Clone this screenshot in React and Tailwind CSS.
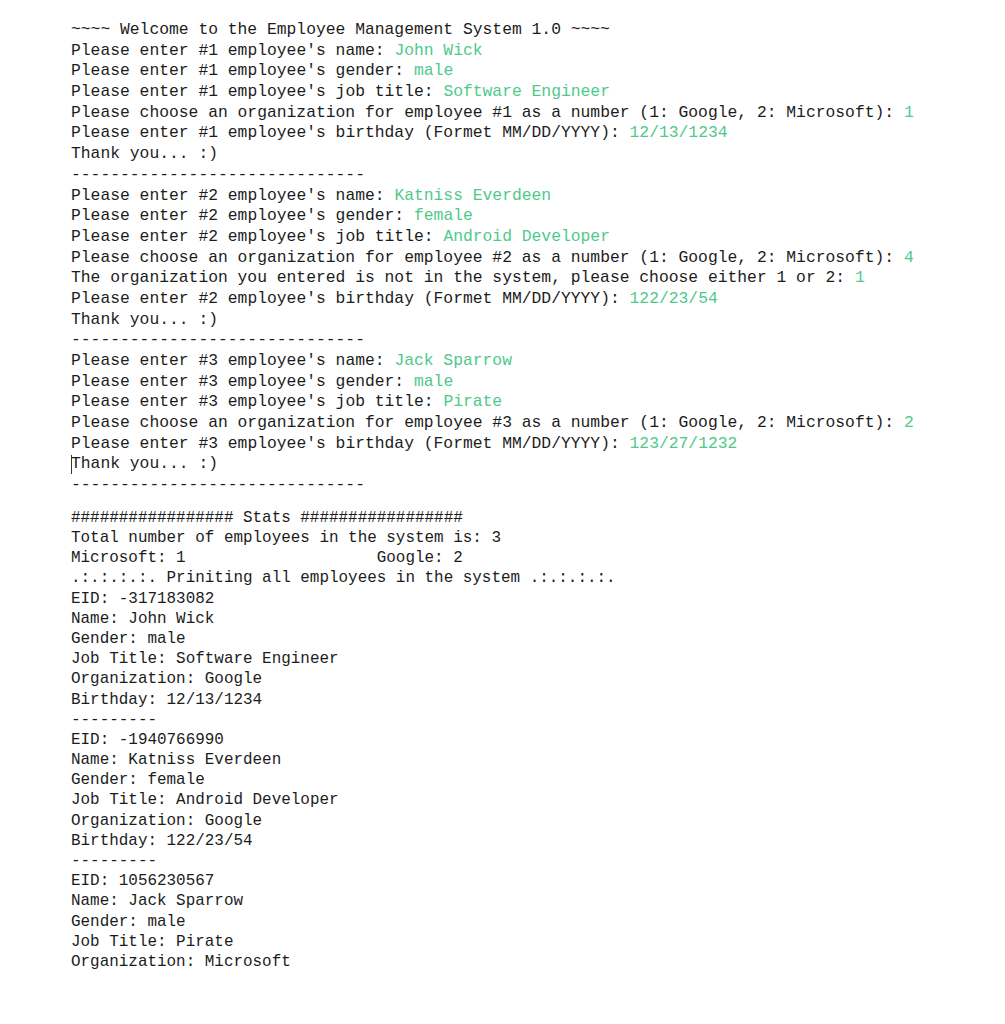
import React from 'react';

const G = ({ children }) => <span className="text-[#4fc98b]">{children}</span>;

const dash30 = '-'.repeat(30);

const employees = [
  { n: 1, name: 'John Wick', gender: 'male', job: 'Software Engineer', org: '1', birthday: '12/13/1234' },
  { n: 2, name: 'Katniss Everdeen', gender: 'female', job: 'Android Developer', org: '4', retry: '1', birthday: '122/23/54' },
  { n: 3, name: 'Jack Sparrow', gender: 'male', job: 'Pirate', org: '2', birthday: '123/27/1232', cursor: true },
];

const records = [
  { eid: '-317183082', name: 'John Wick', gender: 'male', job: 'Software Engineer', org: 'Google', birthday: '12/13/1234' },
  { eid: '-1940766990', name: 'Katniss Everdeen', gender: 'female', job: 'Android Developer', org: 'Google', birthday: '122/23/54' },
  { eid: '1056230567', name: 'Jack Sparrow', gender: 'male', job: 'Pirate', org: 'Microsoft' },
];

export default function App() {
  return (
    <div className="min-h-[1024px] w-[1005px] bg-white text-[#1c1c1c] font-['Liberation_Mono',monospace] pl-[71px] pt-[20px]">
      <div className="text-[16.33px] leading-[20.68px] whitespace-pre">
        <div>~~~~ Welcome to the Employee Management System 1.0 ~~~~</div>
        {employees.map((e) => (
          <React.Fragment key={e.n}>
            <div>Please enter #{e.n} employee's name: <G>{e.name}</G></div>
            <div>Please enter #{e.n} employee's gender: <G>{e.gender}</G></div>
            <div>Please enter #{e.n} employee's job title: <G>{e.job}</G></div>
            <div>Please choose an organization for employee #{e.n} as a number (1: Google, 2: Microsoft): <G>{e.org}</G></div>
            {e.retry && (
              <div>The organization you entered is not in the system, please choose either 1 or 2: <G>{e.retry}</G></div>
            )}
            <div>Please enter #{e.n} employee's birthday (Formet MM/DD/YYYY): <G>{e.birthday}</G></div>
            <div className="relative">
              {e.cursor && <span className="absolute left-[0px] top-[1px] h-[19px] w-px bg-[#333]" />}
              Thank you... :)
            </div>
            <div>{dash30}</div>
          </React.Fragment>
        ))}
      </div>

      <div className="mt-[12px] text-[15.93px] leading-[20.18px] whitespace-pre">
        <div>################# Stats #################</div>
        <div>Total number of employees in the system is: 3</div>
        <div>{'Microsoft: 1' + ' '.repeat(20) + 'Google: 2'}</div>
        <div>.:.:.:.:. Priniting all employees in the system .:.:.:.:.</div>
        {records.map((r, i) => (
          <React.Fragment key={r.eid}>
            <div>EID: {r.eid}</div>
            <div>Name: {r.name}</div>
            <div>Gender: {r.gender}</div>
            <div>Job Title: {r.job}</div>
            <div>Organization: {r.org}</div>
            {r.birthday && <div>Birthday: {r.birthday}</div>}
            {i < records.length - 1 && <div>---------</div>}
          </React.Fragment>
        ))}
      </div>
    </div>
  );
}
